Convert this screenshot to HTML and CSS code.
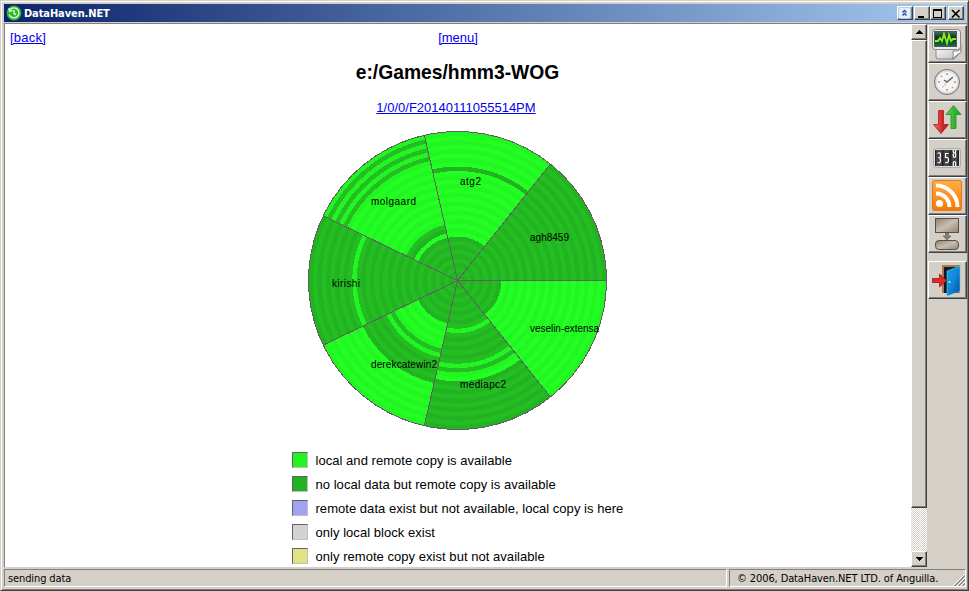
FILE: index.html
```
<!DOCTYPE html>
<html lang="en">
<head>
<meta charset="utf-8">
<title>DataHaven.NET</title>
<link rel="stylesheet" href="styles.css">
</head>
<body>
<div class="window">
  <header class="titlebar">
    <svg class="app-icon" width="16" height="16" viewBox="0 0 16 16">
      <circle cx="8" cy="8" r="7.4" fill="#2fb52f"/>
      <path d="M4 4.7A5 5 0 1 1 3.2 9.4M3 3.2l.5 3 3-.5M8 5v3.4l2 1.3" fill="none" stroke="#e9ffe9" stroke-width="1.3"/>
    </svg>
    <span class="title">DataHaven.NET</span>
    <div class="controls">
      <button class="ctl roll"><svg width="13" height="12" viewBox="0 0 13 12"><rect x=".5" y=".5" width="12" height="11" rx="2" fill="#e4effc" stroke="#b6cbe8"/><path d="M4.5 5.5l2-2 2 2M4.5 8.5l2-2 2 2" fill="none" stroke="#2c4f9c" stroke-width="1.4"/></svg></button>
      <button class="ctl"><svg width="12" height="10" viewBox="0 0 12 10" shape-rendering="crispEdges"><path d="M2 7h6v2H2z"/></svg></button>
      <button class="ctl"><svg width="12" height="10" viewBox="0 0 12 10" shape-rendering="crispEdges"><path d="M1 0h9v9H1zM2 2v6h7V2z" fill-rule="evenodd"/></svg></button>
      <button class="ctl close"><svg width="12" height="10" viewBox="0 0 12 10"><path d="M2 1l7.500 7.500M9.500 1L2 8.500" stroke="#000" stroke-width="1.7"/></svg></button>
    </div>
  </header>
  <div class="middle">
    <main class="page">
      <nav class="links"><a class="back" href="#">[back]</a><a href="#">[menu]</a><span></span></nav>
      <h1>e:/Games/hmm3-WOG</h1>
      <p class="version"><a href="#">1/0/0/F20140111055514PM</a></p>
      <svg class="chart" id="chart" width="300" height="300" viewBox="0 0 300 300"></svg>
      <ul class="legend">
        <li><i class="swatch both"></i>local and remote copy is available</li>
        <li><i class="swatch remote"></i>no local data but remote copy is available</li>
        <li><i class="swatch local"></i>remote data exist but not available, local copy is here</li>
        <li><i class="swatch block"></i>only local block exist</li>
        <li><i class="swatch lost"></i>only remote copy exist but not available</li>
      </ul>
    </main>
    <div class="scrollbar">
      <div class="sb-btn"><svg width="7" height="4" viewBox="0 0 7 4" shape-rendering="crispEdges"><path d="M3 0h1v1h1v1h1v1h1v1H0V3h1V2h1V1h1z"/></svg></div>
      <div class="thumb"></div>
      <div class="track"></div>
      <div class="sb-btn"><svg width="7" height="4" viewBox="0 0 7 4" shape-rendering="crispEdges"><path d="M0 0h7v1H6v1H5v1H4v1H3V3H2V2H1V1H0z"/></svg></div>
    </div>
    <aside class="toolbar">
      <button class="tool"><svg width="32" height="32" viewBox="0 0 32 32">
        <defs>
          <linearGradient id="paper" x2="1" y2="1"><stop stop-color="#fff"/><stop offset="1" stop-color="#bdbdbd"/></linearGradient>
          <linearGradient id="screen" x2="0" y2="1"><stop stop-color="#48705c"/><stop offset=".4" stop-color="#0b3325"/><stop offset="1" stop-color="#1a6b48"/></linearGradient>
        </defs>
        <path d="M5 17h25v7l-7 7H7q-2 0-2-2z" fill="url(#paper)" stroke="#888"/>
        <path d="M21 31q2-3 1-8 5 1 8-2v3z" fill="#fff" stroke="#888"/>
        <rect x="1.500" y="1.500" width="28" height="20" rx="3" fill="#ececec" stroke="#888"/>
        <rect x="3.500" y="3.500" width="22" height="15" fill="url(#screen)" stroke="#555"/>
        <path d="M4 13h3l2-3 2 3 2-7 3 9 2-8 2 6 2-2h3" fill="none" stroke="#8df014" stroke-width="1.8"/>
      </svg></button>
      <button class="tool"><svg width="32" height="32" viewBox="0 0 32 32">
        <circle cx="16" cy="16" r="12.500" fill="#aaa" stroke="#777"/>
        <circle cx="16" cy="16" r="11" fill="#f4f4f4" stroke="#ddd" stroke-width="1.500"/>
        <path d="M16 7v2M16 23v2M7 16h2M23 16h2M10 10l1 1M22 22l-1-1" stroke="#999" stroke-width="1.500"/>
        <path d="M16 16l-5 6" stroke="#f7a0a0"/>
        <path d="M13 14l3 2 6-5" fill="none" stroke="#666" stroke-width="1.500"/>
      </svg></button>
      <button class="tool"><svg width="32" height="32" viewBox="0 0 32 32">
        <defs>
          <linearGradient id="red"><stop stop-color="#ef7777"/><stop offset=".6" stop-color="#cf2525"/><stop offset="1" stop-color="#b01515"/></linearGradient>
          <linearGradient id="green"><stop stop-color="#56d256"/><stop offset="1" stop-color="#1d991d"/></linearGradient>
        </defs>
        <path d="M7.500 6.500h5v14h5L10 29.500l-7.500-9h5z" fill="url(#red)" stroke="#b43030"/>
        <path d="M22.500 1.500l7.500 9h-5v14h-5v-14h-5z" fill="url(#green)" stroke="#319b31"/>
      </svg></button>
      <button class="tool"><svg width="32" height="32" viewBox="0 0 32 32">
        <rect x="2.500" y="6.500" width="27" height="19" rx="2" fill="#ddd" stroke="#aaa"/>
        <rect x="4" y="8" width="24" height="16" fill="#222"/>
        <path d="M5 8h6v16H5zM12.500 8h6v16h-6zM20.500 8h6v16h-6z" fill="#444"/>
        <g fill="none" stroke="#fff" stroke-width="1.200">
          <path d="M6.500 11.500q3-2 3 1.500t-2 2.500q2 0 2 3t-3 2"/>
          <path d="M17.500 11.500h-3v4q3-1 3 2.500t-3.200 2.500"/>
          <path d="M22.300 8v1.500q0 1.500 1.200 1.500t1.200-1.500V8M23.500 11q-1.200 0-1.200 1.500v1.500q0 1.500 1.200 1.500t1.200-1.500v-1.500q0-1.500-1.200-1.500M22.300 24v-3q0-1.500 1.200-1.500t1.200 1.500v3"/>
        </g>
      </svg></button>
      <button class="tool"><svg width="32" height="32" viewBox="0 0 32 32">
        <defs><linearGradient id="rss" x2="0" y2="1"><stop stop-color="#ffad43"/><stop offset="1" stop-color="#f57a08"/></linearGradient></defs>
        <rect x="1.500" y=".5" width="29" height="30" rx="2" fill="url(#rss)" stroke="#e0791d"/>
        <circle cx="8.500" cy="23.500" r="3.500" fill="#fff"/>
        <path d="M5 13.500A13.500 13.500 0 0 1 18.500 27M5 5.500A21.500 21.500 0 0 1 26.500 27" fill="none" stroke="#fff" stroke-width="4"/>
      </svg></button>
      <button class="tool"><svg width="32" height="32" viewBox="0 0 32 32">
        <defs><linearGradient id="stone" x2="1" y2="1"><stop stop-color="#8c8173"/><stop offset=".5" stop-color="#c9beb0"/><stop offset="1" stop-color="#8f8374"/></linearGradient></defs>
        <rect x="4.500" y=".5" width="23" height="14" fill="url(#stone)" stroke="#55504a"/>
        <path d="M14.500 15h3v3h2.500l-4 4-4-4h2.500z" fill="#887d70" stroke="#5f574e" stroke-width=".6"/>
        <rect x="4.500" y="22.500" width="23" height="9" rx="3.500" fill="url(#stone)" stroke="#55504a"/>
      </svg></button>
      <button class="tool exit"><svg width="32" height="32" viewBox="0 0 32 32">
        <defs><linearGradient id="door" x2="1" y2="1"><stop stop-color="#13a5ef"/><stop offset=".5" stop-color="#1286d8"/><stop offset="1" stop-color="#064a98"/></linearGradient></defs>
        <path d="M11 1h18v28H11z" fill="#a67b52"/><path d="M13 3h14v26H13z" fill="#15181c"/>
        <path d="M16 7l13-5v25l-13 5z" fill="url(#door)" stroke="#60c8fa" stroke-width=".6"/>
        <circle cx="18.500" cy="18" r="1" fill="#cceeff"/>
        <path d="M1.500 14.500h7V10l7 6.500-7 6.500v-4.500h-7z" fill="#df2929" stroke="#9d1717" stroke-width=".8"/>
      </svg></button>
    </aside>
  </div>
  <footer class="status">
    <div class="pane message">sending data</div>
    <div class="pane copyright"><span>© 2006, DataHaven.NET LTD. of Anguilla.</span>
      <svg class="grip" width="12" height="12" viewBox="0 0 12 12"><path d="M0 12L12 0M4 12l8-8M8 12l4-4" stroke="#fff" stroke-width="1"/><path d="M1 12L12 1M2 12L12 2M5 12l7-7M6 12l6-6M9 12l3-3M10 12l2-2" stroke="#808080" stroke-width=".8"/></svg>
    </div>
  </footer>
</div>
<script src="chart.js"></script>
</body>
</html>
```
FILE: styles.css
```
* { box-sizing: border-box; }
body { margin: 0; font-family: "Liberation Sans", Arial, sans-serif; font-size: 13px; overflow: hidden; }
a { color: #0000ee; }
button { padding: 0; margin: 0; font: inherit; }
svg { display: block; }
.window {
  width: 969px; height: 591px; display: flex; flex-direction: column;
  background: #d4d0c8; padding: 3px 1px 2px 3px;
  border: 1px solid #d4d0c8; border-right-color: #404040; border-bottom-color: #404040;
  box-shadow: inset 1px 1px #fff, inset -1px -1px #808080;
}
.titlebar {
  height: 18px; flex: none; display: flex; align-items: center; margin-right: 1px;
  background: linear-gradient(90deg, #0a246a, #a6caf0); padding: 0 2px 0 2px;
}
.app-icon { margin-right: 2px; }
.title { flex: 1; color: #fff; font: bold 11px "DejaVu Sans Condensed", "DejaVu Sans", sans-serif; letter-spacing: -0.1px; }
.controls { display: flex; }
.ctl, .tool, .sb-btn, .thumb {
  background: #d4d0c8; border: 1px solid; border-color: #fff #404040 #404040 #fff;
  box-shadow: inset -1px -1px #808080; border-radius: 0;
}
.ctl { width: 16px; height: 14px; padding: 1px 0 0 1px; }
.ctl.roll { margin-right: 1px; padding: 0; }
.ctl.close { margin-left: 2px; }
.middle { height: 545px; flex: none; display: flex; border-top: 1px solid #808080; margin-top: 1px; }
.page {
  width: 907px; height: 543px; background: #fff; border-left: 1px solid #808080; overflow: hidden;
  display: flex; flex-direction: column; align-items: center; line-height: 15px;
}
.links { align-self: stretch; display: grid; grid-template-columns: 1fr auto 1fr; padding: 6px 5px 0; }
.back { justify-self: start; letter-spacing: 0.25px; }
h1 { font-size: 19.3px; line-height: 24px; margin: 16px 1px 0 0; }
.version { margin: 15px 4px 0 0; }
.chart { margin-top: 16px; flex: none; }
.chart .line { stroke: #606060; stroke-width: 1; fill: none; }
.chart text { font-size: 10px; fill: #000; }
.legend { list-style: none; margin: 17px 0 0; padding: 0; width: 333px; flex: none; letter-spacing: 0.04px; }
.legend li { display: flex; align-items: center; height: 24px; white-space: nowrap; }
.swatch { width: 16px; height: 16px; margin-right: 8px; border: 1px solid; border-color: #606060 #c0c0c0 #c0c0c0 #606060; }
.both { background: #22f522; }
.remote { background: #22b222; }
.local { background: #a2a2f5; }
.block { background: #d2d2d2; }
.lost { background: #e2e282; }
.scrollbar { width: 16px; height: 543px; display: flex; flex-direction: column; background: #d4d0c8; }
.sb-btn { height: 16px; flex: none; display: flex; align-items: center; justify-content: center; }
.thumb { height: 468px; flex: none; }
.track { flex: 1; background: repeating-conic-gradient(#fff 0 25%, #d4d0c8 0 50%) 0 0 / 2px 2px; }
.toolbar { width: 39px; margin-left: 1px; padding-top: 1px; }
.tool { display: flex; width: 39px; height: 38px; padding: 2px 0 0 2px; }
.tool svg { overflow: visible; }
.tool.exit { margin-top: 8px; }
.status { display: flex; gap: 2px; height: 19px; flex: none; margin-right: 1px; font: 11px/17px "DejaVu Sans Condensed", "DejaVu Sans", sans-serif; letter-spacing: -0.11px; }
.pane { height: 18px; margin-top: 1px; border: 1px solid; border-color: #808080 #fff #fff #808080; }
.message { width: 723px; padding-left: 3px; }
.copyright { flex: 1; padding-left: 7px; display: flex; justify-content: space-between; white-space: nowrap; }
.grip { align-self: flex-end; flex: none; }
```
FILE: chart.js
```
// Each supplier owns one slice; "local" lists the blocks that also have a local copy.
const BLOCKS = 34;
const RADIUS = 149;
const CENTER = 149.5;
const range = (a, b) => Array.from({ length: b - a + 1 }, (_, i) => a + i);
const suppliers = [
  { name: "agh8459", local: [], x: 222, y: 110, width: 39 },
  { name: "atg2", local: [...range(10, 24), ...range(26, 33)], x: 152, y: 54, width: 21 },
  { name: "molgaard", local: [10, ...range(13, 27), 29, 31, 33], x: 63, y: 74, width: 45 },
  { name: "kirishi", local: [23], x: 24, y: 156, width: 28 },
  { name: "derekcatewin2", local: [...range(10, 15), 17, ...range(24, 33)], x: 63, y: 237, width: 66 },
  { name: "mediapc2", local: [11, 19, 21, 22], x: 152, y: 257, width: 46 },
  { name: "veselin-extensa", local: range(10, 33), x: 222, y: 201, width: 69 }
];
const chart = document.getElementById("chart");
const add = (tag, attrs, text) => {
  const el = document.createElementNS("http://www.w3.org/2000/svg", tag);
  for (const key in attrs) el.setAttribute(key, attrs[key]);
  if (text) el.textContent = text;
  chart.appendChild(el);
};
const step = 2 * Math.PI / suppliers.length;
const point = (r, a) => `${CENTER + r * Math.cos(a)} ${CENTER - r * Math.sin(a)}`;
suppliers.forEach((s, n) => {
  for (let i = BLOCKS - 1; i >= 0; i--) {
    const r = RADIUS * (i + 1) / BLOCKS;
    const fill = s.local.includes(i)
      ? (i % 2 ? "#22f522" : "#22ff22")
      : (i % 2 ? "#22b222" : "#22be22");
    add("path", {
      d: `M${CENTER} ${CENTER}L${point(r, n * step)}A${r} ${r} 0 0 0 ${point(r, (n + 1) * step)}Z`,
      fill, "shape-rendering": "crispEdges"
    });
  }
});
suppliers.forEach((s, n) => {
  add("path", { class: "line", d: `M${CENTER} ${CENTER}L${point(RADIUS, n * step)}`, "shape-rendering": "crispEdges" });
});
add("circle", { class: "line", cx: CENTER, cy: CENTER, r: RADIUS, "shape-rendering": "crispEdges" });
suppliers.forEach(s => add("text", { x: s.x, y: s.y, textLength: s.width }, s.name));
```
